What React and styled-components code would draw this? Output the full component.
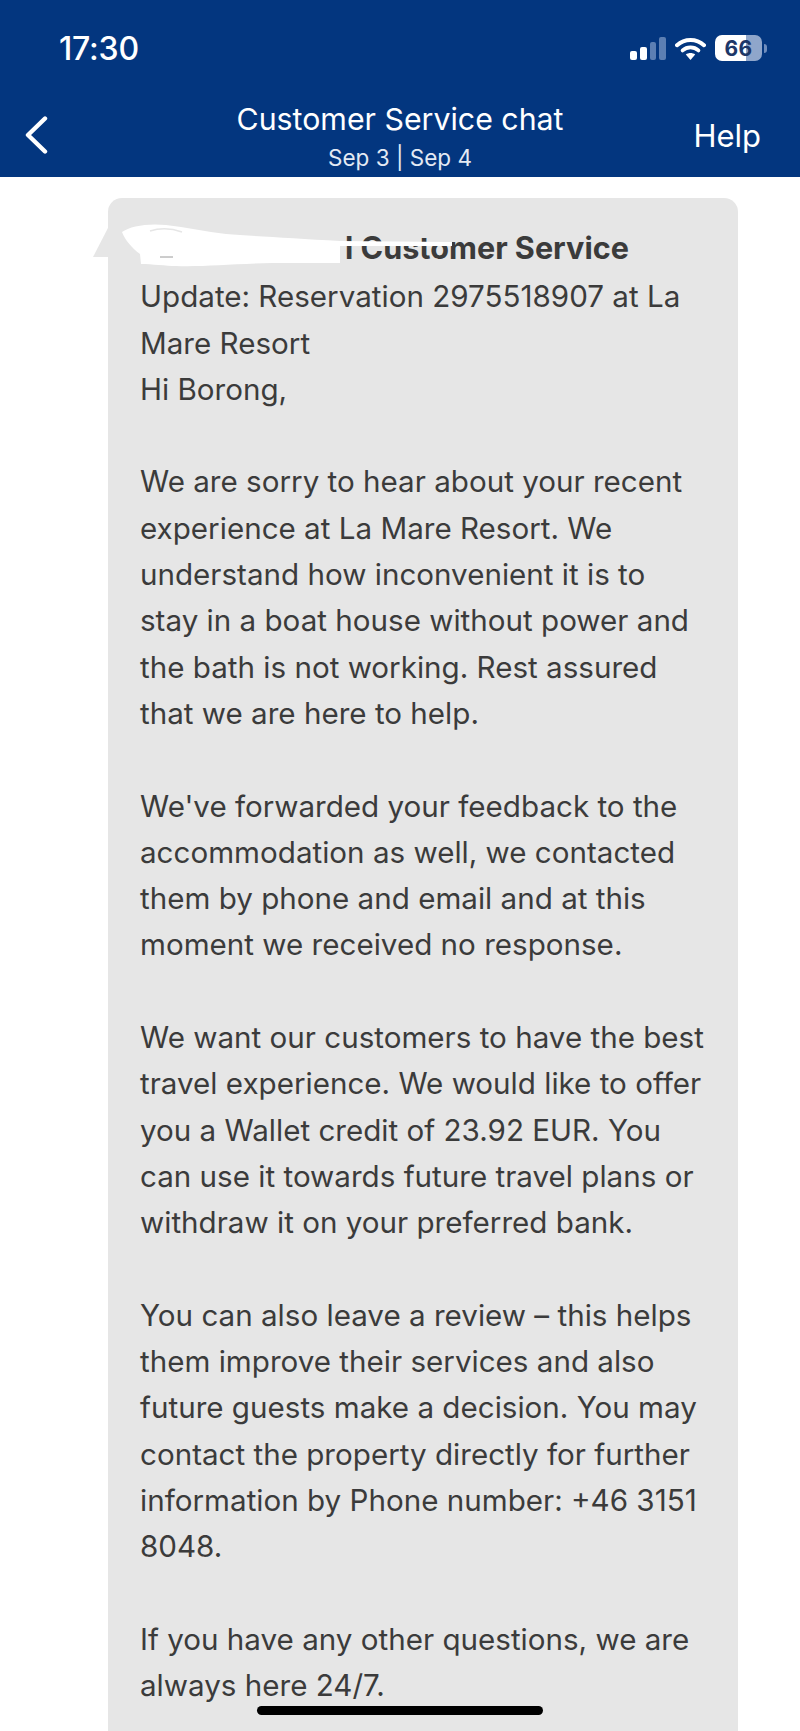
import React from "react";
import styled, { createGlobalStyle } from "styled-components";

const paragraphs = [
  ["Update: Reservation 2975518907 at La", "Mare Resort", "Hi Borong,"],
  [
    "We are sorry to hear about your recent",
    "experience at La Mare Resort. We",
    "understand how inconvenient it is to",
    "stay in a boat house without power and",
    "the bath is not working. Rest assured",
    "that we are here to help.",
  ],
  [
    "We've forwarded your feedback to the",
    "accommodation as well, we contacted",
    "them by phone and email and at this",
    "moment we received no response.",
  ],
  [
    "We want our customers to have the best",
    "travel experience. We would like to offer",
    "you a Wallet credit of 23.92 EUR. You",
    "can use it towards future travel plans or",
    "withdraw it on your preferred bank.",
  ],
  [
    "You can also leave a review – this helps",
    "them improve their services and also",
    "future guests make a decision. You may",
    "contact the property directly for further",
    "information by Phone number: +46 3151",
    "8048.",
  ],
  ["If you have any other questions, we are", "always here 24/7."],
];

export default function App() {
  return (
    <Screen>
      <GlobalStyle />
      <Header>
        <StatusBar>
          <Clock>17:30</Clock>
          <StatusIcons>
            <SignalBars />
            <WifiIcon />
            <Battery />
          </StatusIcons>
        </StatusBar>
        <NavBar>
          <BackButton>
            <svg width="24" height="38" viewBox="0 0 24 38" fill="none">
              <path d="M21 2.5 4 19l17 16.5" stroke="#fff" strokeWidth="4.4" strokeLinecap="round" strokeLinejoin="round" />
            </svg>
          </BackButton>
          <TitleBlock>
            <Title>Customer Service chat</Title>
            <Subtitle>Sep 3 | Sep 4</Subtitle>
          </TitleBlock>
          <HelpLink>Help</HelpLink>
        </NavBar>
      </Header>
      <Chat>
        <Bubble>
          <Tail />
          <Sender>l Customer Service</Sender>
          {paragraphs.map((lines, i) => (
            <Paragraph key={i}>
              {lines.map((line) => (
                <Line key={line}>{line}</Line>
              ))}
            </Paragraph>
          ))}
          <Scribble />
        </Bubble>
      </Chat>
      <HomeIndicator />
    </Screen>
  );
}

function SignalBars() {
  return (
    <svg width="36" height="23" viewBox="0 0 36 23">
      <rect x="0" y="14" width="7" height="9" rx="2" fill="#fff" />
      <rect x="10" y="10" width="7" height="13" rx="2" fill="#fff" />
      <rect x="20" y="5" width="6" height="18" rx="2" fill="#5c7fb3" />
      <rect x="29" y="0" width="7" height="23" rx="2" fill="#5c7fb3" />
    </svg>
  );
}

function WifiIcon() {
  return (
    <svg width="31" height="23" viewBox="0 0 31 23" fill="none">
      <path d="M2 8.2C9.6 1.2 21.4 1.2 29 8.2" stroke="#fff" strokeWidth="4" strokeLinecap="round" />
      <path d="M7.6 13.4c4.5-4 11.3-4 15.8 0" stroke="#fff" strokeWidth="3.8" strokeLinecap="round" />
      <path d="M15.5 23 10.8 17.6c2.7-2 6.7-2 9.4 0z" fill="#fff" />
    </svg>
  );
}

function Battery() {
  return (
    <BatteryWrap>
      <BatteryBody>
        <BatteryLevel>66</BatteryLevel>
      </BatteryBody>
      <BatteryNub />
    </BatteryWrap>
  );
}

// white marker strokes that hide the sender name in the screenshot
function Scribble() {
  return (
    <ScribbleSvg width="340" height="50" viewBox="0 0 340 50">
      <path
        fill="#fff"
        d="M0 10C8 4 26 1 44 3C64 5 84 10 104 12C130 14 170 16 218 19L330 20L330 24L218 24L218 41L150 41C110 42 80 45 54 44C44 44 30 42 19 42L18 32C10 26 3 18 0 10Z"
      />
      <path d="M28 9C40 5 52 7 60 10" stroke="#e6e6e6" strokeWidth="1.5" fill="none" />
      <path d="M38 35h13" stroke="#9a9a9a" strokeWidth="1" />
    </ScribbleSvg>
  );
}

const GlobalStyle = createGlobalStyle`
  html, body {
    margin: 0;
    padding: 0;
    background: #fff;
  }
`;

const Screen = styled.div`
  position: relative;
  width: 800px;
  height: 1731px;
  overflow: hidden;
  background: #fff;
  font-family: Inter, "Liberation Sans", sans-serif;
`;

const Header = styled.header`
  height: 177px;
  box-sizing: border-box;
  background: #03367f;
  color: #fff;
`;

const StatusBar = styled.div`
  height: 96px;
  box-sizing: border-box;
  padding: 0 33px 0 59px;
  display: flex;
  align-items: center;
  justify-content: space-between;
`;

const Clock = styled.span`
  font-size: 32px;
  font-weight: 500;
  letter-spacing: -0.2px;
`;

const StatusIcons = styled.div`
  display: flex;
  align-items: center;
  gap: 9px;
`;

const BatteryWrap = styled.div`
  display: flex;
  align-items: center;
  gap: 2px;
`;

const BatteryBody = styled.div`
  width: 47px;
  height: 26px;
  border-radius: 7px;
  display: flex;
  align-items: center;
  justify-content: center;
  background: linear-gradient(to right, #fff 66%, #8fa6cb 66%);
`;

const BatteryLevel = styled.span`
  font-size: 21px;
  font-weight: 700;
  color: #1d3768;
  letter-spacing: 0.3px;
`;

const BatteryNub = styled.div`
  width: 3px;
  height: 9px;
  border-radius: 0 3px 3px 0;
  background: #6f8dbd;
`;

const NavBar = styled.nav`
  height: 81px;
  box-sizing: border-box;
  padding: 5px 24px 0 24px;
  display: grid;
  grid-template-columns: 60px 1fr 60px;
  align-items: start;
`;

const BackButton = styled.div`
  padding-top: 15px;
  line-height: 0;
`;

const TitleBlock = styled.div`
  text-align: center;
`;

const Title = styled.div`
  font-size: 30.3px;
  line-height: 36px;
  white-space: nowrap;
`;

const Subtitle = styled.div`
  font-size: 22.5px;
  line-height: 30px;
  margin-top: 6px;
  color: #e4eaf4;
`;

const HelpLink = styled.div`
  font-size: 31px;
  line-height: 36px;
  margin: 17px 15px 0 0;
  justify-self: end;
`;

const Chat = styled.main`
  padding: 21px 62px 0 108px;
`;

const Bubble = styled.section`
  position: relative;
  padding: 27px 20px 60px 32px;
  border-radius: 14px;
  background: #e6e6e6;
  color: #3b3b3b;
  font-size: 29.6px;
  line-height: 46.3px;
`;

const Tail = styled.div`
  position: absolute;
  left: -15px;
  top: 28px;
  width: 0;
  height: 0;
  border-style: solid;
  border-width: 0 0 31px 16px;
  border-color: transparent transparent #e6e6e6 transparent;
`;

const Sender = styled.div`
  padding-left: 205px;
  margin-bottom: 2px;
  font-size: 30.6px;
  font-weight: 700;
  white-space: nowrap;
`;

const Paragraph = styled.div`
  & + & {
    margin-top: 46.3px;
  }
`;

const Line = styled.div`
  white-space: nowrap;
`;

const ScribbleSvg = styled.svg`
  position: absolute;
  left: 14px;
  top: 24px;
`;

const HomeIndicator = styled.div`
  position: absolute;
  left: 257px;
  top: 1706px;
  width: 286px;
  height: 9px;
  border-radius: 5px;
  background: #000;
`;
